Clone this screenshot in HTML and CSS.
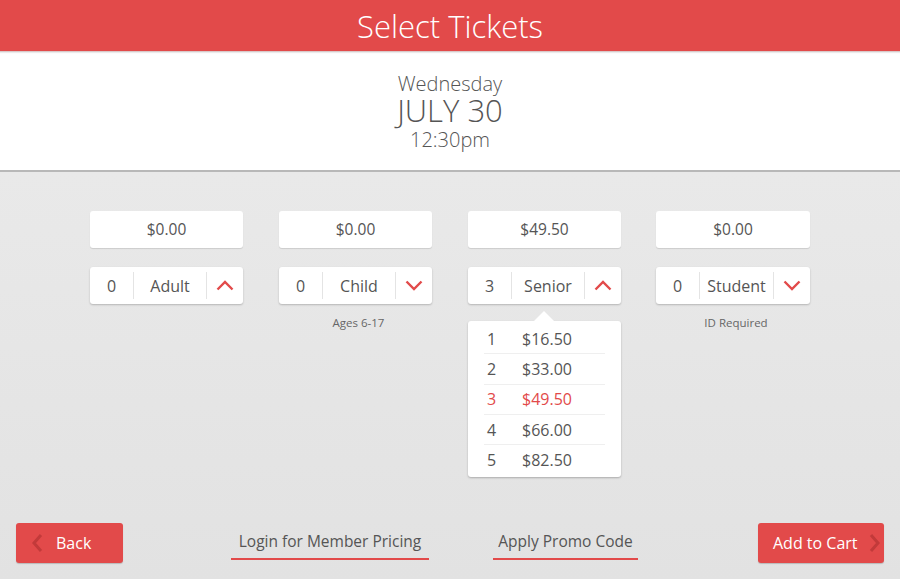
FILE: index.html
```html
<!DOCTYPE html>
<html>
<head>
<meta charset="utf-8">
<link rel="stylesheet" href="styles.css">
</head>
<body>
<div class="page">
  <header class="topbar">Select Tickets</header>
  <section class="date">
    <div class="day">Wednesday</div>
    <div class="month">JULY 30</div>
    <div class="time">12:30pm</div>
  </section>
  <main class="main">
    <div class="grid">
      <div class="col">
        <div class="price">$0.00</div>
        <div class="sel">
          <span class="qty">0</span><span class="label">Adult</span>
          <span class="chev"><svg width="18" height="11" viewBox="0 0 18 11"><polyline points="1.5,9.5 9,2 16.5,9.5" fill="none" stroke="#e24a4a" stroke-width="2.4"/></svg></span>
        </div>
        <div class="note"></div>
      </div>
      <div class="col">
        <div class="price">$0.00</div>
        <div class="sel">
          <span class="qty">0</span><span class="label">Child</span>
          <span class="chev"><svg width="18" height="11" viewBox="0 0 18 11"><polyline points="1.5,1.5 9,9 16.5,1.5" fill="none" stroke="#e24a4a" stroke-width="2.4"/></svg></span>
        </div>
        <div class="note">Ages 6-17</div>
      </div>
      <div class="col">
        <div class="price">$49.50</div>
        <div class="sel">
          <span class="qty">3</span><span class="label">Senior</span>
          <span class="chev"><svg width="18" height="11" viewBox="0 0 18 11"><polyline points="1.5,9.5 9,2 16.5,9.5" fill="none" stroke="#e24a4a" stroke-width="2.4"/></svg></span>
        </div>
        <div class="menu">
          <div class="row"><span class="n">1</span><span>$16.50</span></div>
          <div class="row"><span class="n">2</span><span>$33.00</span></div>
          <div class="row active"><span class="n">3</span><span>$49.50</span></div>
          <div class="row"><span class="n">4</span><span>$66.00</span></div>
          <div class="row"><span class="n">5</span><span>$82.50</span></div>
        </div>
      </div>
      <div class="col">
        <div class="price">$0.00</div>
        <div class="sel">
          <span class="qty">0</span><span class="label">Student</span>
          <span class="chev"><svg width="18" height="11" viewBox="0 0 18 11"><polyline points="1.5,1.5 9,9 16.5,1.5" fill="none" stroke="#e24a4a" stroke-width="2.4"/></svg></span>
        </div>
        <div class="note">ID Required</div>
      </div>
    </div>
    <footer class="footer">
      <button class="btn back"><svg class="bchev" width="12" height="20" viewBox="0 0 12 20"><polyline points="10,2 3,10 10,18" fill="none" stroke="#c23a3a" stroke-width="3"/></svg><span>Back</span></button>
      <a class="link login">Login for Member Pricing</a>
      <a class="link promo">Apply Promo Code</a>
      <button class="btn cart"><span>Add to Cart</span><svg class="bchev" width="12" height="20" viewBox="0 0 12 20"><polyline points="2,2 9,10 2,18" fill="none" stroke="#c23a3a" stroke-width="3"/></svg></button>
    </footer>
  </main>
</div>
</body>
</html>
```
FILE: styles.css
```css
* { box-sizing: border-box; }
html, body { margin: 0; padding: 0; }
body {
  font-family: "Open Sans", "Liberation Sans", sans-serif;
  color: #555;
  width: 900px;
  height: 579px;
  overflow: hidden;
}
.page {
  display: flex;
  flex-direction: column;
  height: 579px;
}
.topbar {
  height: 52px;
  background: #e24a4a;
  color: #fff;
  font-weight: 300;
  font-size: 31px;
  line-height: 52px;
  text-align: center;
  border-bottom: 1px solid #d9c9c9;
  box-shadow: 0 1px 1px rgba(0,0,0,0.08);
  position: relative;
  z-index: 2;
}
.date {
  height: 120px;
  background: #fff;
  border-bottom: 2px solid #b8b8b8;
  text-align: center;
  color: #555;
  font-weight: 300;
  padding-top: 20px;
}
.day { font-size: 20px; line-height: 24px; }
.month { font-size: 31px; line-height: 28px; }
.time { font-size: 20px; line-height: 32px; }
.main {
  flex: 1;
  background: linear-gradient(#e9e9e9, #e2e2e2);
  display: flex;
  flex-direction: column;
  justify-content: space-between;
  padding-top: 39px;
}
.grid {
  display: grid;
  grid-template-columns: repeat(4, 153px);
  column-gap: 36px;
  justify-content: center;
}
.col { position: relative; }
.col:nth-child(4) { margin-left: -1px; }
.price {
  height: 37px;
  background: #fff;
  border-radius: 3px;
  box-shadow: 0 1px 1px rgba(0,0,0,0.12);
  text-align: center;
  font-size: 15.5px;
  line-height: 37px;
  color: #555;
}
.sel {
  margin-top: 19px;
  height: 37px;
  background: #fff;
  border-radius: 3px;
  box-shadow: 0 1px 2px rgba(0,0,0,0.22);
  display: flex;
  align-items: center;
  font-size: 16px;
  color: #555;
  padding: 5px 0;
}
.qty {
  width: 44px;
  text-align: center;
  border-right: 1px solid #e4e4e4;
  height: 27px;
  line-height: 28px;
}
.label {
  flex: 1;
  text-align: center;
  border-right: 1px solid #e4e4e4;
  height: 27px;
  line-height: 28px;
}
.chev {
  width: 36px;
  display: flex;
  justify-content: center;
  align-items: center;
}
.note {
  text-align: center;
  font-size: 11.5px;
  color: #666;
  margin-top: 11px;
  padding-left: 6px;
}
.menu {
  position: absolute;
  top: 110px;
  left: 0;
  width: 153px;
  background: #fff;
  border-radius: 3px;
  box-shadow: 0 1px 2px rgba(0,0,0,0.25);
  padding: 3px 16px 2px 16px;
  z-index: 3;
}
.menu::before {
  content: "";
  position: absolute;
  top: -10px;
  left: 66px;
  border-left: 10px solid transparent;
  border-right: 10px solid transparent;
  border-bottom: 10px solid #fff;
}
.row {
  display: flex;
  height: 30.3px;
  align-items: center;
  font-size: 16px;
  color: #555;
  border-bottom: 1px solid #efefef;
}
.row:last-child { border-bottom: none; }
.row .n { width: 38px; padding-left: 3px; }
.row.active { color: #e24a4a; }
.footer {
  display: flex;
  align-items: flex-start;
  padding: 0 16px 16px 16px;
  height: 56px;
}
.btn {
  height: 40px;
  background: #e24a4a;
  border: none;
  border-radius: 3px;
  box-shadow: 0 1px 1px rgba(0,0,0,0.18);
  color: #fff;
  font-family: "Open Sans", "Liberation Sans", sans-serif;
  font-size: 16px;
  display: flex;
  align-items: center;
  padding: 0;
}
.back { width: 107px; padding-left: 15px; }
.back span { margin-left: 13px; }
.cart { width: 126px; padding-left: 15px; margin-left: auto; }
.cart .bchev { margin-left: 11px; }
.link {
  font-size: 15.5px;
  color: #555;
  border-bottom: 2px solid #e24a4a;
  height: 37px;
  line-height: 37px;
  display: block;
  white-space: nowrap;
  text-align: center;
}
.login { margin-left: 108px; width: 198px; }
.promo { margin-left: 64px; width: 145px; }
```
